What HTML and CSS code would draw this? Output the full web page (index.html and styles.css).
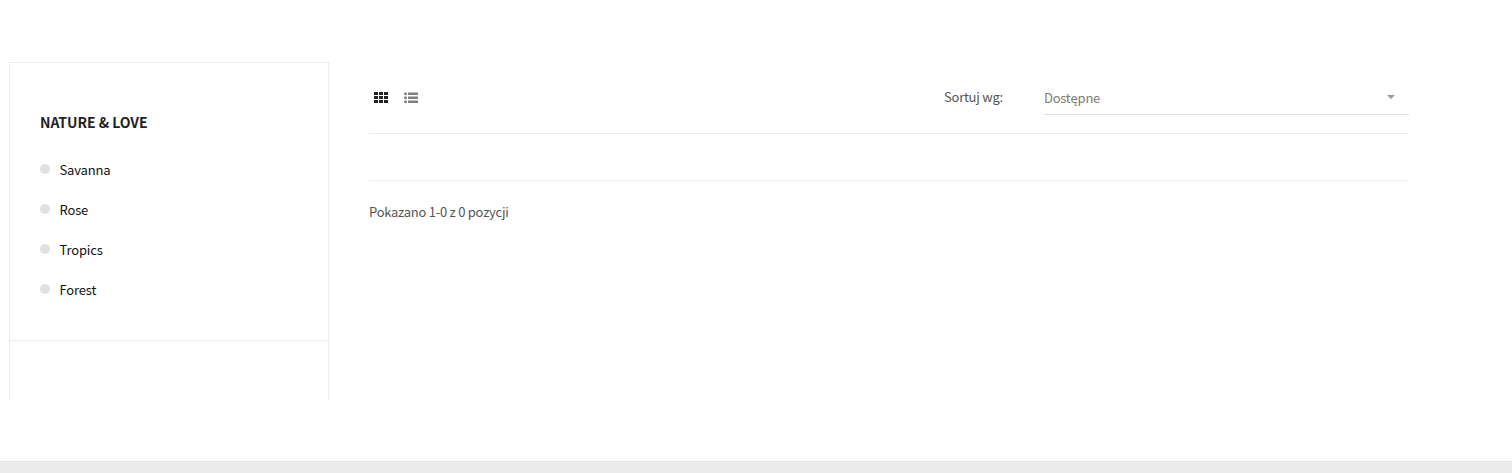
FILE: index.html
```html
<!DOCTYPE html>
<html lang="pl">
<head>
  <meta charset="UTF-8" />
  <title>Nature &amp; Love</title>
  <link rel="stylesheet" href="styles.css">
</head>
<body>
  <div class="page">
    <aside class="sidebar">
      <div class="filter">
        <h3>NATURE &amp; LOVE</h3>
        <ul>
          <li><span class="dot"></span>Savanna</li>
          <li><span class="dot"></span>Rose</li>
          <li><span class="dot"></span>Tropics</li>
          <li><span class="dot"></span>Forest</li>
        </ul>
      </div>
    </aside>

    <main class="products">
      <div class="toolbar">
        <div class="views">
          <svg class="view-icon" width="14" height="12" viewBox="0 0 14 12" fill="#222">
            <rect x="0" y="0" width="4" height="3" />
            <rect x="5" y="0" width="4" height="3" />
            <rect x="10" y="0" width="4" height="3" />
            <rect x="0" y="4" width="4" height="3" />
            <rect x="5" y="4" width="4" height="3" />
            <rect x="10" y="4" width="4" height="3" />
            <rect x="0" y="8" width="4" height="3" />
            <rect x="5" y="8" width="4" height="3" />
            <rect x="10" y="8" width="4" height="3" />
          </svg>
          <svg class="view-icon" width="14" height="12" viewBox="0 0 14 12" fill="#808080">
            <circle cx="1.5" cy="1.8" r="1.5" />
            <circle cx="1.5" cy="5.8" r="1.5" />
            <circle cx="1.5" cy="9.8" r="1.5" />
            <rect x="4" y="0.5" width="10" height="2.5" />
            <rect x="4" y="4.5" width="10" height="2.5" />
            <rect x="4" y="8.5" width="10" height="2.5" />
          </svg>
        </div>
        <div class="sort">
          <span class="sort-label">Sortuj wg:</span>
          <div class="select">
            <span>Dostępne</span>
            <span class="caret"></span>
          </div>
        </div>
      </div>
      <div class="empty-list"></div>
      <p class="count">Pokazano 1-0 z 0 pozycji</p>
    </main>
  </div>
  <footer class="footer"></footer>
</body>
</html>
```

FILE: styles.css
```css
* {
  margin: 0;
  padding: 0;
  box-sizing: border-box;
}
html, body {
  height: 100%;
}
body {
  display: flex;
  flex-direction: column;
  font-family: "Noto Sans CJK SC", "Noto Sans", sans-serif;
  font-size: 13px;
  letter-spacing: -0.25px;
  background: #fff;
  color: #555;
  overflow: hidden;
}
.page {
  flex: 1;
  display: flex;
  align-items: flex-start;
  padding: 62px 0 0 9px;
}
.sidebar {
  width: 320px;
  height: 339px;
  border: 1px solid #ebebeb;
  border-bottom: none;
}
.filter {
  height: 278px;
  padding: 48px 30px 0;
  border-bottom: 1px solid #ebebeb;
}
.filter h3 {
  font-size: 14px;
  line-height: 22px;
  font-weight: 700;
  letter-spacing: -0.03px;
  color: #222;
  margin-bottom: 16px;
}
.filter ul {
  list-style: none;
}
.filter li {
  display: flex;
  align-items: center;
  height: 40px;
  color: #111;
  letter-spacing: -0.15px;
}
.dot {
  width: 10px;
  height: 10px;
  border-radius: 50%;
  background: #e0e0e0;
  margin: -1px 9.5px 0 0;
}
.products {
  width: 1040px;
  margin-left: 40px;
}
.toolbar {
  display: flex;
  justify-content: space-between;
  height: 72px;
  padding-top: 19px;
  border-bottom: 1px solid #ebebeb;
}
.views {
  display: flex;
  gap: 16px;
  padding: 11px 0 0 5px;
}
.sort {
  display: flex;
}
.sort-label {
  width: 100px;
  padding-top: 6px;
  line-height: 20px;
  color: #555;
}
.select {
  width: 365px;
  height: 34px;
  display: flex;
  justify-content: space-between;
  padding: 7px 14px 0 0;
  line-height: 20px;
  color: #807a72;
  border-bottom: 1px solid #ddd;
}
.caret {
  width: 0;
  height: 0;
  margin-top: 7px;
  border-left: 4px solid transparent;
  border-right: 4px solid transparent;
  border-top: 4px solid #999;
}
.empty-list {
  height: 47px;
  border-bottom: 1px solid #ebebeb;
}
.count {
  margin-top: 21px;
  line-height: 20px;
  color: #555;
}
.footer {
  height: 12px;
  background: #ebebeb;
  border-top: 1px solid #e4e4e4;
}
```
